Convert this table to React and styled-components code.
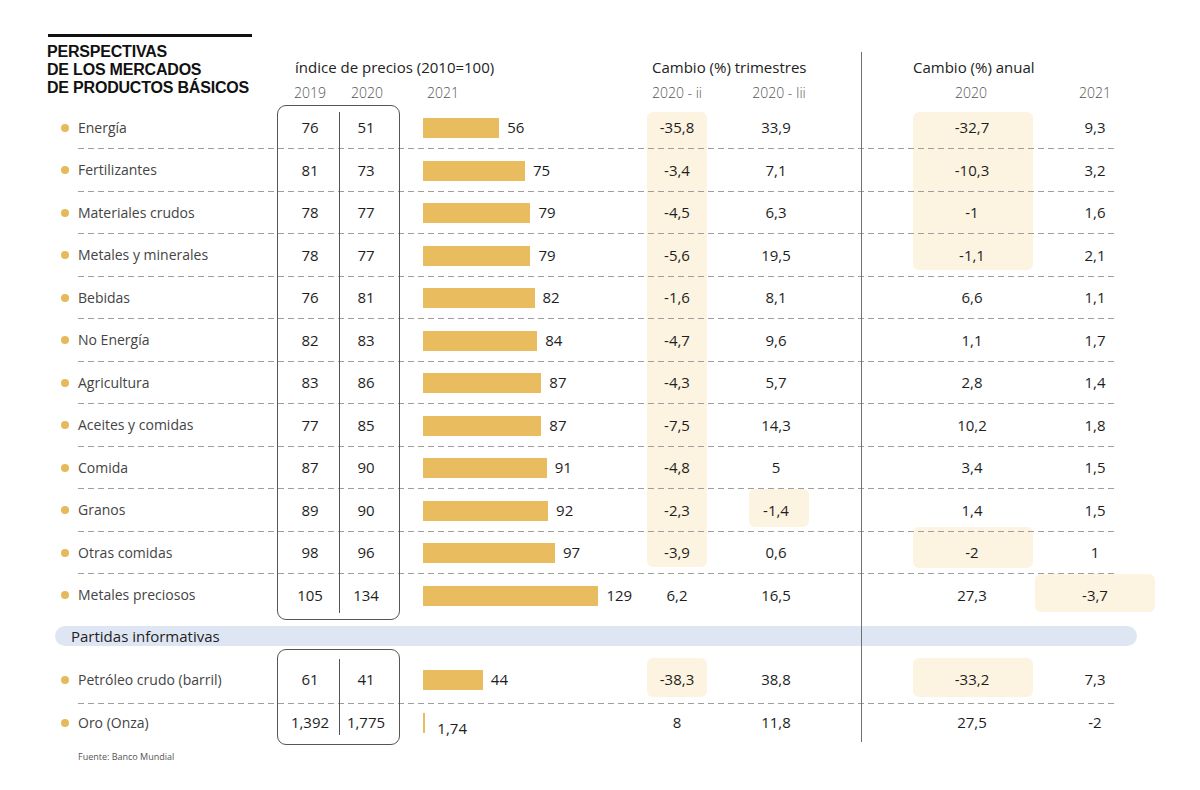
import React from 'react';
import styled, { createGlobalStyle } from 'styled-components';

const GlobalStyle = createGlobalStyle`
  html, body { margin: 0; padding: 0; background: #fff; }
  body { font-family: "Open Sans", "Noto Sans", sans-serif; color: #1e1e1e; }
`;

const COLS = '230px 62px 61px 23px 224px 60px 42px 60px 104px 120px 2px 120px';

const Page = styled.div`
  width: 1200px;
  height: 790px;
  box-sizing: border-box;
  padding: 34px 0 0 47px;
  overflow: hidden;
`;

const Table = styled.div`
  display: grid;
  grid-template-columns: ${COLS};
  grid-template-rows: 18px 28px 26.5px repeat(12, 42.5px) 32.5px 55px 42.6px 20px;
`;

const Title = styled.div`
  grid-column: 1;
  grid-row: 1 / 4;
  display: flex;
  flex-direction: column;
`;

const TitleBar = styled.div`
  width: 204px;
  height: 3px;
  margin-left: 1px;
  background: #111;
`;

const TitleText = styled.h1`
  margin: 6px 0 0;
  font-family: "Liberation Sans", Arial, sans-serif;
  font-size: 16px;
  line-height: 18px;
  letter-spacing: -0.2px;
  font-weight: 700;
  color: #111;
  white-space: nowrap;
`;

const Row = styled.div`
  grid-column: 1 / -1;
  grid-row: ${p => p.$row};
  display: grid;
  grid-template-columns: ${COLS};
  align-items: center;
  box-sizing: border-box;
  padding: ${p => p.$pad || '0 0 1px'};
`;

const GroupHead = styled.div`
  grid-column: ${p => p.$col};
  padding-left: ${p => p.$indent || 0}px;
  font-size: 15px;
  color: #222;
  white-space: nowrap;
  margin-top: 2px;
`;

const YearHead = styled.div`
  grid-column: ${p => p.$col};
  text-align: ${p => p.$align || 'center'};
  padding: ${p => p.$pad || '0'};
  font-size: 14px;
  font-weight: 300;
  color: #555;
  white-space: nowrap;
`;

const Label = styled.div`
  grid-column: 1;
  display: flex;
  align-items: center;
  gap: 9px;
  padding-left: 14px;
  font-size: 14px;
  color: #444;
  white-space: nowrap;
`;

const Dot = styled.span`
  width: 8px;
  height: 8px;
  border-radius: 50%;
  background: #e6b95a;
  flex: none;
  margin-top: 1px;
`;

const Num = styled.div`
  grid-column: ${p => p.$col};
  text-align: center;
  padding: ${p => p.$pad || '0'};
  font-size: 15px;
  color: #1e1e1e;
  white-space: nowrap;
`;

const BarCell = styled.div`
  grid-column: 5;
  display: flex;
  align-items: center;
  font-size: 15px;
  color: #1e1e1e;
`;

const Bar = styled.div`
  height: 20px;
  margin-top: 2px;
  background: #e8bc5f;
  flex: none;
`;

const BarValue = styled.span`
  margin-left: ${p => (p.$low ? 12 : 8)}px;
  margin-top: ${p => (p.$low ? 11 : 0)}px;
  white-space: nowrap;
`;

const Highlight = styled.div`
  grid-column: ${p => p.$col};
  grid-row: ${p => p.$rows};
  margin: ${p => p.$mt}px 0 ${p => p.$mb}px;
  background: #fdf3e1;
  border-radius: 6px;
`;

const Rule = styled.div`
  grid-column: 1 / -1;
  grid-row: ${p => p.$row};
  align-self: end;
  height: 1px;
  margin: 0 38px 0 31px;
  background-image: linear-gradient(to right, #9e9e9e 0 6px, transparent 6px 10px);
  background-size: 10px 1px;
`;

const Box = styled.div`
  grid-column: 2 / 4;
  grid-row: ${p => p.$rows};
  margin: ${p => p.$m};
  border: 1px solid #555;
  border-radius: 9px;
`;

const BoxDivider = styled.div`
  grid-column: 3;
  grid-row: ${p => p.$rows};
  justify-self: start;
  width: 1px;
  margin: ${p => p.$m};
  background: #555;
`;

const VLine = styled.div`
  grid-column: 9;
  grid-row: 2 / 19;
  justify-self: center;
  width: 1px;
  margin-bottom: 4.6px;
  background: #707070;
`;

const Band = styled.div`
  grid-column: 1 / -1;
  grid-row: 16;
  align-self: end;
  height: 20px;
  margin: 0 18px 3px 8px;
  padding-left: 16px;
  display: flex;
  align-items: center;
  background: #dfe6f3;
  border-radius: 10px;
  font-size: 15px;
  color: #1e1e1e;
`;

const Source = styled.div`
  grid-column: 1 / 4;
  grid-row: 19;
  align-self: center;
  padding-left: 31px;
  font-size: 9px;
  color: #555;
  white-space: nowrap;
`;

const MAIN = [
  ['Energía', '76', '51', 56, '-35,8', '33,9', '-32,7', '9,3'],
  ['Fertilizantes', '81', '73', 75, '-3,4', '7,1', '-10,3', '3,2'],
  ['Materiales crudos', '78', '77', 79, '-4,5', '6,3', '-1', '1,6'],
  ['Metales y minerales', '78', '77', 79, '-5,6', '19,5', '-1,1', '2,1'],
  ['Bebidas', '76', '81', 82, '-1,6', '8,1', '6,6', '1,1'],
  ['No Energía', '82', '83', 84, '-4,7', '9,6', '1,1', '1,7'],
  ['Agricultura', '83', '86', 87, '-4,3', '5,7', '2,8', '1,4'],
  ['Aceites y comidas', '77', '85', 87, '-7,5', '14,3', '10,2', '1,8'],
  ['Comida', '87', '90', 91, '-4,8', '5', '3,4', '1,5'],
  ['Granos', '89', '90', 92, '-2,3', '-1,4', '1,4', '1,5'],
  ['Otras comidas', '98', '96', 97, '-3,9', '0,6', '-2', '1'],
  ['Metales preciosos', '105', '134', 129, '6,2', '16,5', '27,3', '-3,7'],
];

const INFO = [
  { row: 17, pad: '5px 0 0', data: ['Petróleo crudo (barril)', '61', '41', 44, '-38,3', '38,8', '-33,2', '7,3'] },
  { row: 18, pad: '0 0 6px', data: ['Oro (Onza)', '1,392', '1,775', 1.74, '8', '11,8', '27,5', '-2'], low: true },
];

const HIGHLIGHTS = [
  { col: 6, rows: '4 / 15', mt: 5, mb: 7 },
  { col: 8, rows: '13 / 14', mt: 0, mb: 4.5 },
  { col: 10, rows: '4 / 8', mt: 5, mb: 6.5 },
  { col: 10, rows: '14 / 15', mt: -4.5, mb: 6 },
  { col: 12, rows: '15 / 16', mt: 0, mb: 4.5 },
  { col: 6, rows: '17 / 18', mt: 9, mb: 7 },
  { col: 10, rows: '17 / 18', mt: 9, mb: 7 },
];

const fmt = v => (Number.isInteger(v) ? String(v) : String(v).replace('.', ','));

function DataRow({ row, pad, data, low }) {
  const [label, a, b, c, t2, t3, y20, y21] = data;
  return (
    <Row $row={row} $pad={pad}>
      <Label><Dot />{label}</Label>
      <Num $col={2} $pad="0 0 0 4px">{a}</Num>
      <Num $col={3} $pad="0 7px 0 0">{b}</Num>
      <BarCell>
        <Bar style={{ width: `${Math.max(2, c * 1.36)}px` }} />
        <BarValue $low={low}>{fmt(c)}</BarValue>
      </BarCell>
      <Num $col={6}>{t2}</Num>
      <Num $col={8} $pad="0 6px 0 0">{t3}</Num>
      <Num $col={10} $pad="0 2px 0 0">{y20}</Num>
      <Num $col={12}>{y21}</Num>
    </Row>
  );
}

export default function App() {
  return (
    <>
      <GlobalStyle />
      <Page>
        <Table>
          {HIGHLIGHTS.map((h, i) => (
            <Highlight key={i} $col={h.col} $rows={h.rows} $mt={h.mt} $mb={h.mb} />
          ))}
          <Band>Partidas informativas</Band>

          <Title>
            <TitleBar />
            <TitleText>
              PERSPECTIVAS<br />DE LOS MERCADOS<br />DE PRODUCTOS BÁSICOS
            </TitleText>
          </Title>

          <Row $row={2} $pad="0">
            <GroupHead $col="2 / 6" $indent={18}>índice de precios (2010=100)</GroupHead>
            <GroupHead $col="6 / 9" $indent={5}>Cambio (%) trimestres</GroupHead>
            <GroupHead $col="10 / 13">Cambio (%) anual</GroupHead>
          </Row>
          <Row $row={3} $pad="0 0 2px">
            <YearHead $col={2} $pad="0 0 0 4px">2019</YearHead>
            <YearHead $col={3} $pad="0 5px 0 0">2020</YearHead>
            <YearHead $col={5} $align="left" $pad="0 0 0 4px">2021</YearHead>
            <YearHead $col={6}>2020 - ii</YearHead>
            <YearHead $col={8}>2020 - Iii</YearHead>
            <YearHead $col={10} $pad="0 4px 0 0">2020</YearHead>
            <YearHead $col={12}>2021</YearHead>
          </Row>

          {MAIN.map((d, i) => (
            <DataRow key={d[0]} row={4 + i} data={d} />
          ))}
          {INFO.map(r => (
            <DataRow key={r.data[0]} row={r.row} pad={r.pad} data={r.data} low={r.low} />
          ))}

          {MAIN.slice(0, 11).map((d, i) => (
            <Rule key={d[0]} $row={4 + i} />
          ))}
          <Rule $row={17} />

          <Box $rows="4 / 16" $m="-1.5px 0 -3.5px" />
          <BoxDivider $rows="4 / 16" $m="5.5px 0 3.5px" />
          <Box $rows="17 / 19" $m="0 0 1.6px" />
          <BoxDivider $rows="17 / 19" $m="10px 0 11.6px" />

          <VLine />

          <Source>Fuente: Banco Mundial</Source>
        </Table>
      </Page>
    </>
  );
}
